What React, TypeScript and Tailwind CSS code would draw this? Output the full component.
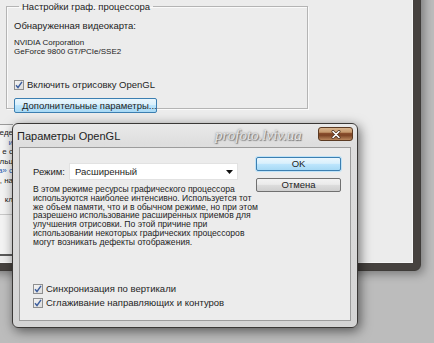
import React from "react";

const UI = "font-['Liberation_Sans','Noto_Sans',sans-serif]";

function Check({ label }: { label: string }) {
  return (
    <div className="flex items-center gap-[3px] h-[14px]">
      <div className="w-[10px] h-[10px] border border-[#8f8f8f] bg-gradient-to-br from-[#f4f4f4] to-[#dcdcdc] flex items-center justify-center">
        <svg width="8" height="8" viewBox="0 0 8 8">
          <path d="M1 4.2 L3 6.5 L7 0.8" fill="none" stroke="#3d5f9e" strokeWidth="1.4" />
        </svg>
      </div>
      <span className="text-[9.5px] text-[#1e1e1e] leading-none whitespace-nowrap">{label}</span>
    </div>
  );
}

function BackWindow() {
  return (
    <div className="absolute left-[-10px] top-[-20px] w-[431px] h-[291px] rounded-br-[6px] border border-[#3f3c39] bg-[linear-gradient(90deg,#d4d4d4_0,#d4d4d4_1px,#5f5b57_1px,#8c8884_3px,#6a6662_5px,#46423f_7px)] pr-[7px] pb-[7px] shadow-[3px_3px_10px_rgba(0,0,0,0.35)]">
      <div className="h-full bg-[#ececec] pl-[15px] pt-[21px] pr-[104px] border-r border-b border-[#f6f6f6]">
        <fieldset className="border border-[#b4b4b4] shadow-[inset_1px_1px_0_#fafafa,1px_1px_0_#fafafa] h-[107px] px-[7px] m-0">
          <legend className="text-[9.5px] text-[#222] px-[3px] ml-[5px] leading-none whitespace-nowrap">Настройки граф. процессора</legend>
          <div className="text-[9.5px] text-[#222] mt-[9px] leading-none whitespace-nowrap">Обнаруженная видеокарта:</div>
          <div className="text-[8px] text-[#222] mt-[8px] leading-[9px] whitespace-nowrap">
            <div>NVIDIA Corporation</div>
            <div>GeForce 9800 GT/PCIe/SSE2</div>
          </div>
          <div className="mt-[22px]">
            <Check label="Включить отрисовку OpenGL" />
          </div>
          <button className="mt-0 h-[15px] w-[143px] rounded-[2px] border border-[#3c7fb1] bg-[linear-gradient(#eaf6fd,#d9f0fc_45%,#bee6fd_50%,#a7d9f5)] text-[9.5px] leading-none text-[#1e1e1e] text-left pl-[7px] whitespace-nowrap">
            Дополнительные параметры...
          </button>
        </fieldset>
      </div>
    </div>
  );
}

function LeftFragment() {
  const lines = [
    { t: "еде", c: "text-[#222]" },
    { t: "и", c: "text-[#2a5db0]" },
    { t: "е с", c: "text-[#222]" },
    { t: "пльц", c: "text-[#222]" },
    { t: "а» с", c: "text-[#2a5db0]" },
    { t: ", на", c: "text-[#222]" },
    { t: "", c: "" },
    { t: "кл", c: "text-[#222]" },
  ];
  return (
    <div className="absolute left-0 top-[124px] w-[13px] h-[132px] overflow-hidden bg-[#f3f3f3] border-t border-[#9a9a9a] border-b-2 border-b-[#5a5a5a]">
      <div className="flex flex-col items-end pt-[3px] text-[8px] leading-[9.5px] w-[13px]">
        {lines.map((l, i) => (
          <div key={i} className={`${l.c} whitespace-nowrap h-[9.5px]`}>{l.t}</div>
        ))}
      </div>
      <div className="mt-[10px] border-t border-[#c8c8c8]" />
    </div>
  );
}

function Dialog() {
  return (
    <div className="absolute left-[12px] top-[123px] w-[346px] h-[205px] rounded-[6px] border border-[#3a3836] bg-[linear-gradient(#e9e9e9,#dedede_20px,#d4d4d4)] shadow-[2px_3px_12px_rgba(0,0,0,0.55)] flex flex-col px-[6px] pb-[6px]">
      {/* title bar */}
      <div className="relative h-[23px] pt-[2px] flex items-center">
        <span className="ml-[-2px] text-[11px] text-[#1e1e1e] leading-none whitespace-nowrap">Параметры OpenGL</span>
        <span className="absolute left-[196px] top-[4px] font-['Liberation_Serif',serif] italic text-[15px] text-[#e6e6e6] leading-none whitespace-nowrap [text-shadow:0_0_2px_#6e6e6e,1px_1px_1px_#7a7a7a]">
          profoto.lviv.ua
        </span>
        <div className="absolute right-[-2px] top-[3px] w-[35px] h-[14px] rounded-[3px] border border-[#5b3a22] bg-[linear-gradient(#d8b48e,#c69a6e_35%,#8a4e2c_45%,#7c4324_60%,#b9875d)] flex items-center justify-center">
          <svg width="10" height="9" viewBox="0 0 10 9">
            <path d="M2 1.5 L8 7.5 M8 1.5 L2 7.5" stroke="#4a3020" strokeWidth="3" strokeLinecap="round" />
            <path d="M2 1.5 L8 7.5 M8 1.5 L2 7.5" stroke="#ffffff" strokeWidth="1.6" strokeLinecap="round" />
          </svg>
        </div>
      </div>
      {/* client */}
      <div className="flex-1 border border-[#9c9c9c] bg-[#ececec] flex pl-[13px] pr-[9px]">
        <div className="flex flex-col w-[210px]">
          <div className="mt-[15px] flex items-center h-[17px]">
            <span className="text-[9.5px] text-[#1e1e1e] leading-none w-[36px] whitespace-nowrap">Режим:</span>
            <div className="w-[169px] h-[17px] bg-white border border-[#e2e2e2] flex items-center pl-[5px] pr-[4px]">
              <span className="text-[9.5px] text-[#1e1e1e] leading-none flex-1 whitespace-nowrap">Расширенный</span>
              <svg width="7" height="4" viewBox="0 0 7 4">
                <path d="M0 0 H7 L3.5 4 Z" fill="#111" />
              </svg>
            </div>
          </div>
          <p className="mt-[5px] text-[8.6px] leading-[8.8px] text-[#1c1c1c] whitespace-nowrap">
            В этом режиме ресурсы графического процессора<br />
            используются наиболее интенсивно. Используется тот<br />
            же объем памяти, что и в обычном режиме, но при этом<br />
            разрешено использование расширенных приемов для<br />
            улучшения отрисовки. По этой причине при<br />
            использовании некоторых графических процессоров<br />
            могут возникать дефекты отображения.
          </p>
          <div className="mt-auto mb-[10px] flex flex-col">
            <Check label="Синхронизация по вертикали" />
            <Check label="Сглаживание направляющих и контуров" />
          </div>
        </div>
        <div className="ml-auto w-[85px] pt-[9px] flex flex-col gap-[7px]">
          <button className="h-[14px] rounded-[2px] border border-[#3c7fb1] bg-[linear-gradient(#eaf6fd,#d9f0fc_45%,#bee6fd_50%,#a7d9f5)] text-[9.5px] leading-none text-[#1e1e1e] shadow-[0_0_0_1px_#bfe3f8]">
            OK
          </button>
          <button className="h-[14px] rounded-[2px] border border-[#707070] bg-[linear-gradient(#f2f2f2,#ebebeb_45%,#dddddd_50%,#cfcfcf)] text-[9.5px] leading-none text-[#1e1e1e]">
            Отмена
          </button>
        </div>
      </div>
    </div>
  );
}

export default function App() {
  return (
    <div className={`relative w-[434px] h-[343px] overflow-hidden bg-[#bcbcbc] ${UI}`}>
      <BackWindow />
      <LeftFragment />
      <Dialog />
    </div>
  );
}
